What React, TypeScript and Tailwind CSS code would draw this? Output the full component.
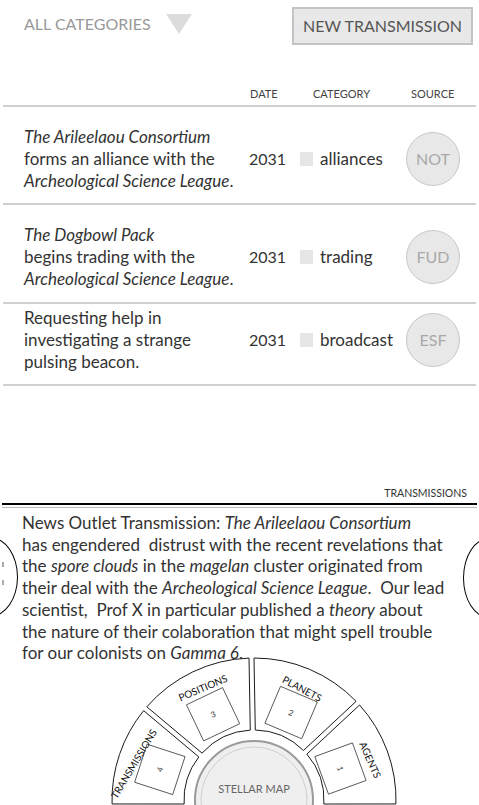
import React from 'react';

const CX = 254;
const CY = 145;
const RO = 142;
const RI = 70;
const TOP = 655; // page y of the svg top

const pt = (r: number, deg: number) => {
  const a = (deg * Math.PI) / 180;
  return [CX + r * Math.cos(a), CY - r * Math.sin(a)];
};

// annular sector, drawn clockwise from the start angles to the end angles
const sector = (o1: number, i1: number, o2: number, i2: number) => {
  const [x1, y1] = pt(RO, o1);
  const [x2, y2] = pt(RO, o2);
  const [x3, y3] = pt(RI, i2);
  const [x4, y4] = pt(RI, i1);
  return `M${x1} ${y1} A${RO} ${RO} 0 0 1 ${x2} ${y2} L${x3} ${y3} A${RI} ${RI} 0 0 0 ${x4} ${y4} Z`;
};

const GO = 1.01;
const GI = 2.05;

const segments = [
  { id: 'transmissions', label: 'TRANSMISSIONS', num: '4', d: sector(181.6, 183.3, 140 + GO, 140 + GI), lx: 134, ly: 764, rot: -59, box: 162, br: 99 },
  { id: 'positions', label: 'POSITIONS', num: '3', d: sector(140 - GO, 140 - GI, 91 + GO, 91 + GI), lx: 203, ly: 688, rot: -23, box: 115.5, br: 95 },
  { id: 'planets', label: 'PLANETS', num: '2', d: sector(91 - GO, 91 - GI, 43 + GO, 43 + GI), lx: 302, ly: 689, rot: 28, box: 67, br: 95 },
  { id: 'agents', label: 'AGENTS', num: '1', d: sector(43 - GO, 43 - GI, -1.6, -3.3), lx: 370, ly: 760, rot: 66, box: 20, br: 92 },
];

function RadialMenu() {
  return (
    <svg width="479" height="150" viewBox="0 0 479 150" className="absolute left-0 bottom-0">
      {segments.map((s) => {
        const [bx, by] = pt(s.br, s.box);
        return (
          <g key={s.id}>
            <path d={s.d} fill="#ffffff" stroke="#1a1a1a" strokeWidth="1" />
            <g transform={`translate(${bx} ${by}) rotate(${90 - s.box})`}>
              <rect x="-20" y="-20" width="40" height="40" fill="none" stroke="#444" strokeWidth="0.8" />
              <text x="0" y="3" fontSize="8" textAnchor="middle" fill="#333">
                {s.num}
              </text>
            </g>
            <text
              transform={`translate(${s.lx} ${s.ly - TOP}) rotate(${s.rot})`}
              x="0"
              y="3.5"
              fontSize="10"
              textAnchor="middle"
              fill="#111"
            >
              {s.label}
            </text>
          </g>
        );
      })}
      <circle cx={CX} cy={CY} r="59" fill="#efefef" stroke="#9a9a9a" strokeWidth="2" />
      <circle cx={CX} cy={CY} r="53" fill="none" stroke="#cfcfcf" strokeWidth="1" />
      <text x={CX} y={CY - 7} fontSize="11" textAnchor="middle" fill="#666">
        STELLAR MAP
      </text>
    </svg>
  );
}

const rows = [
  {
    lines: [
      <i>The Arileelaou Consortium</i>,
      <>forms an alliance with the</>,
      <><i>Archeological Science League</i>.</>,
    ],
    category: 'alliances',
    source: 'NOT',
    pad: 'pt-[19px] pb-[11px]',
  },
  {
    lines: [
      <i>The Dogbowl Pack</i>,
      <>begins trading with the</>,
      <><i>Archeological Science League</i>.</>,
    ],
    category: 'trading',
    source: 'FUD',
    pad: 'pt-[19px] pb-[12px]',
  },
  {
    lines: [<>Requesting help in</>, <>investigating a strange</>, <>pulsing beacon.</>],
    category: 'broadcast',
    source: 'ESF',
    pad: 'pt-[3px] pb-[11px]',
  },
];

const story = [
  <>News Outlet Transmission: <i>The Arileelaou Consortium</i></>,
  <>{'has engendered  distrust with the recent revelations that'}</>,
  <>the <i>spore clouds</i> in the <i>magelan</i> cluster originated from</>,
  <>their deal with the <i>Archeological Science League</i>.{'  Our lead'}</>,
  <>{'scientist,  Prof X in particular published a '}<i>theory</i> about</>,
  <>the nature of their colaboration that might spell trouble</>,
  <>for our colonists on <i>Gamma 6</i>.</>,
];

export default function App() {
  return (
    <div className="relative h-[805px] w-[479px] overflow-hidden bg-white font-['Lato',sans-serif] text-[#333]">
      {/* Top bar */}
      <div className="flex items-start justify-between pl-6 pr-[6px] pt-[7px]">
        <div className="flex items-center gap-[15px] pt-[7px]">
          <span className="text-[16px] leading-[20px] text-[#999]">ALL CATEGORIES</span>
          <svg width="26" height="20" viewBox="0 0 26 20">
            <polygon points="0,0 26,0 13,20" fill="#dcdcdc" />
          </svg>
        </div>
        <button className="flex h-[38px] w-[181px] items-center justify-center border-2 border-[#c4c4c4] bg-[#e8e8e8] text-[16px] text-[#555]">
          NEW TRANSMISSION
        </button>
      </div>

      {/* Table */}
      <div className="mx-[3px]">
        <div className="mt-[43px] flex h-[12px] text-[11px] leading-[12px] text-[#444]">
          <span className="ml-[247px] w-[63px]">DATE</span>
          <span className="w-[98px]">CATEGORY</span>
          <span>SOURCE</span>
        </div>
        <div className="mt-[5px] h-[2px] bg-[#d0d0d0]" />

        {rows.map((row) => (
          <div key={row.source}>
            <div className={`flex items-center pl-[21px] ${row.pad}`}>
              <div className="w-[225px] text-[17px] leading-[22px]">
                {row.lines.map((l, i) => (
                  <div key={i} className="whitespace-pre">
                    {l}
                  </div>
                ))}
              </div>
              <div className="w-[51px] text-[16px]">2031</div>
              <div className="flex w-[106px] items-center gap-[7px] text-[17px]">
                <span className="h-[14px] w-[13px] bg-[#e6e6e6]" />
                {row.category}
              </div>
              <div className="flex h-[54px] w-[54px] items-center justify-center rounded-full border border-[#c8c8c8] bg-[#e8e8e8] text-[16px] text-[#a8a8a8]">
                {row.source}
              </div>
            </div>
            <div className="h-[2px] bg-[#d0d0d0]" />
          </div>
        ))}
      </div>

      {/* Transmission panel */}
      <div className="mt-[101px] flex h-[12px] justify-end pr-[12px] text-[10.5px] leading-[12px] text-[#333]">
        TRANSMISSIONS
      </div>
      <div className="mx-[2px] mt-[4px] h-[2px] bg-black" />
      <div className="mx-[2px] mt-[2px] h-[1px] bg-[#bbbbbb]" />
      <div className="mt-[4px] pl-[22px] text-[17px] leading-[21.7px]">
        {story.map((l, i) => (
          <div key={i} className="whitespace-pre">
            {l}
          </div>
        ))}
      </div>

      {/* Side arrows */}
      <div className="absolute left-[-38px] top-[537px] h-[80px] w-[56px] rounded-[50%] border border-black" />
      <div className="absolute left-[2px] top-[562px] h-[5px] w-[2px] bg-[#aaa]" />
      <div className="absolute left-[2px] top-[580px] h-[5px] w-[2px] bg-[#aaa]" />
      <div className="absolute left-[463px] top-[538px] h-[80px] w-[52px] rounded-[50%] border border-black" />

      <RadialMenu />
    </div>
  );
}
